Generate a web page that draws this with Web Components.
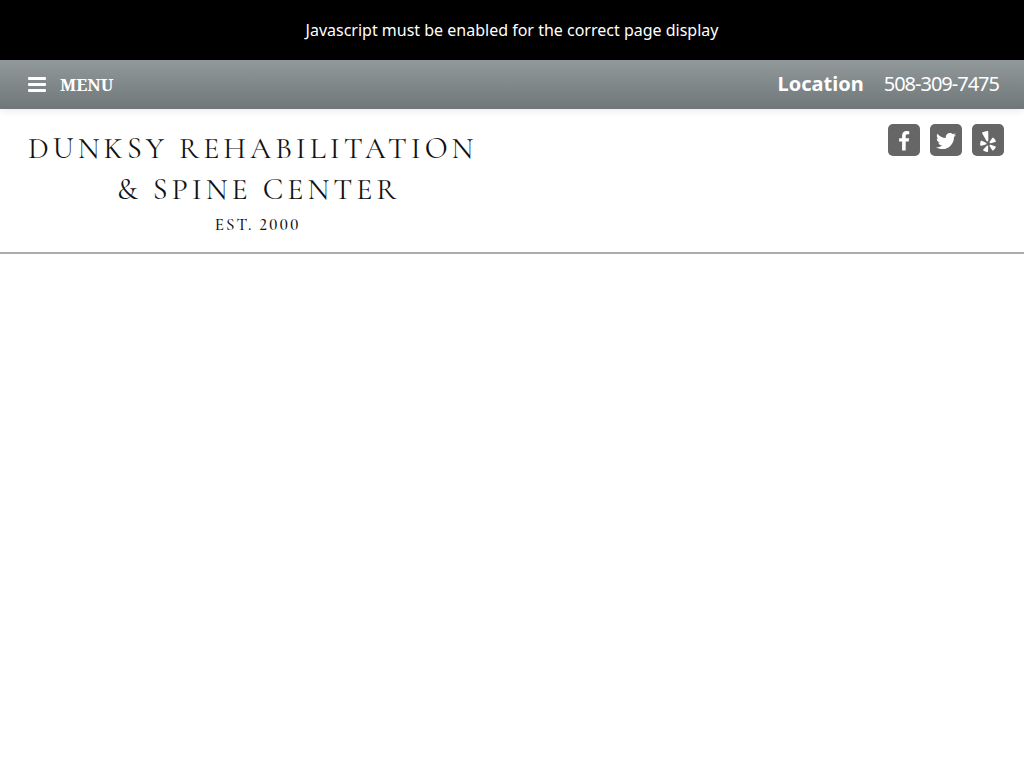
<!DOCTYPE html>
<html lang="en">
<head>
<meta charset="utf-8">
<meta name="viewport" content="width=device-width, initial-scale=1">
<title>Dunksy Rehabilitation &amp; Spine Center</title>
<style>
body { margin: 0; background: #fff; font-family: "Noto Sans", sans-serif; font-size: 16px; }
</style>
</head>
<body>
<page-notice>Javascript must be enabled for the correct page display</page-notice>
<top-bar>
  <bar-link slot="end" href="#location" kind="strong">Location</bar-link>
  <bar-link slot="end" href="tel:5083097475" kind="phone">508-309-7475</bar-link>
</top-bar>
<site-header>
  <site-logo><span slot="name">Dunksy Rehabilitation</span><span slot="detail">&amp; Spine Center</span><span slot="founded">Est. 2000</span></site-logo>
  <social-link slot="social" icon="facebook"></social-link>
  <social-link slot="social" icon="twitter"></social-link>
  <social-link slot="social" icon="yelp"></social-link>
</site-header>
<script>
class BaseElement extends HTMLElement {
  constructor() {
    super();
    this.attachShadow({ mode: "open" });
  }
  connectedCallback() { this.shadowRoot.innerHTML = this.view(); }
}

customElements.define("page-notice", class extends BaseElement {
  view() {
    return `<style>
      :host { display: block; background: #000; color: #fff; text-align: center; line-height: 20px; padding: 20px; }
    </style><slot></slot>`;
  }
});

customElements.define("top-bar", class extends BaseElement {
  view() {
    return `<style>
      :host { display: flex; align-items: center; justify-content: space-between; min-height: 49px; padding: 0 25px 0 28px;
        box-sizing: border-box; color: #fff; background: linear-gradient(#92999b, #6f7779); box-shadow: 0 1px 8px rgba(0,0,0,.1); }
      button { display: flex; align-items: center; gap: 14px; border: 0; padding: 0; background: none; color: inherit;
        font: bold 17px/24px "Noto Serif", "Liberation Serif", serif; cursor: pointer; }
      svg { display: block; width: 18px; height: 15px; fill: currentColor; }
      nav { display: flex; align-items: center; gap: 20px; padding-bottom: 2px; }
    </style>
    <button type="button"><svg viewBox="0 0 18 15" aria-hidden="true"><rect width="18" height="3" rx="1"/><rect y="6" width="18" height="3" rx="1"/><rect y="12" width="18" height="3" rx="1"/></svg>MENU</button>
    <nav><slot name="end"></slot></nav>`;
  }
});

customElements.define("bar-link", class extends BaseElement {
  view() {
    return `<style>
      :host { display: block; }
      a { display: block; color: #fff; text-decoration: none; font-size: 20px; line-height: 28px; }
      :host([kind="strong"]) a { font-weight: bold; }
      :host([kind="phone"]) a { letter-spacing: -1px; }
    </style><a href="${this.getAttribute("href")}"><slot></slot></a>`;
  }
});

customElements.define("site-header", class extends BaseElement {
  view() {
    return `<style>
      :host { display: flex; justify-content: space-between; align-items: flex-start; padding: 15px 20px 13px 28px; border-bottom: 2px solid #acacac; }
      .social { display: flex; gap: 10px; }
    </style><slot></slot><div class="social"><slot name="social"></slot></div>`;
  }
});

customElements.define("site-logo", class extends BaseElement {
  view() {
    return `<style>
      :host { display: block; padding-top: 4px; color: #111; font-family: "Cormorant Garamond", "Liberation Serif", serif; text-transform: uppercase; text-align: center; }
      a { display: block; color: inherit; text-decoration: none; }
      .large { display: block; font-size: 30px; line-height: 41px; letter-spacing: 4px; }
      .detail { padding-left: 12px; }
      .small { display: block; font-size: 17px; line-height: 29px; letter-spacing: 2px; padding-left: 10px; font-weight: 500; font-variant-numeric: lining-nums; }
    </style><a href="#home"><span class="large"><slot name="name"></slot></span><span class="large detail"><slot name="detail"></slot></span><span class="small"><slot name="founded"></slot></span></a>`;
  }
});

const ICONS = {
  facebook: { label: "Facebook", box: "0 0 1024 1792", w: 12, h: 21, d: "M959 12v264H802q-86 0-116 36t-30 108v189h293l-39 296H656v759H350V905H95V609h255V391q0-186 104-288.500T731 0q147 0 228 12z" },
  twitter: { label: "Twitter", box: "0 0 512 512", w: 20, h: 20, d: "M459.370 151.716c.325 4.548.325 9.097.325 13.645 0 138.720-105.583 298.558-298.558 298.558-59.452 0-114.680-17.219-161.137-47.106 8.447.974 16.568 1.299 25.340 1.299 49.055 0 94.213-16.568 130.274-44.832-46.132-.975-84.792-31.188-98.112-72.772 6.498.974 12.995 1.624 19.818 1.624 9.421 0 18.843-1.300 27.614-3.573-48.081-9.747-84.143-51.980-84.143-102.985v-1.299c13.969 7.797 30.214 12.670 47.431 13.319-28.264-18.843-46.781-51.005-46.781-87.391 0-19.492 5.197-37.360 14.294-52.954 51.655 63.675 129.300 105.258 216.365 109.807-1.624-7.797-2.599-15.918-2.599-24.040 0-57.828 46.782-104.934 104.934-104.934 30.213 0 57.502 12.670 76.670 33.137 23.715-4.548 46.456-13.320 66.599-25.340-7.798 24.366-24.366 44.833-46.132 57.827 21.117-2.273 41.584-8.122 60.426-16.243-14.292 20.791-32.161 39.308-52.628 54.253z" },
  yelp: { label: "Yelp", box: "0 0 384 512", w: 16, h: 21, d: "M42.900 240.320l99.620 48.610c19.200 9.400 16.200 37.510-4.500 42.710L30.500 358.450a22.790 22.790 0 0 1-28.210-19.600 197.160 197.160 0 0 1 9-85.320 22.800 22.800 0 0 1 31.610-13.210zm44 239.250a199.450 199.450 0 0 0 79.420 32.110A22.780 22.780 0 0 0 192.940 490l3.900-110.820c.7-21.300-25.500-31.910-39.810-16.100l-74.210 82.400a22.820 22.820 0 0 0 4.090 34.090zm145.340-109.920l58.810 94a22.930 22.930 0 0 0 34 5.500 198.360 198.360 0 0 0 52.710-67.610A23 23 0 0 0 364.170 370l-105.420-34.260c-20.310-6.500-37.810 15.800-26.510 33.910zm148.330-132.230a197.440 197.440 0 0 0-50.410-69.310 22.850 22.850 0 0 0-34 4.400l-62 91.920c-11.900 17.700 4.700 40.610 25.200 34.710L366 268.630a23 23 0 0 0 14.610-31.210zM62.110 30.180a22.860 22.860 0 0 0-9.900 32l104.120 180.440c11.700 20.200 42.610 11.900 42.610-11.400V22.880a22.670 22.670 0 0 0-24.500-22.800 320.370 320.370 0 0 0-112.330 30.100z" }
};

customElements.define("social-link", class extends BaseElement {
  view() {
    const icon = ICONS[this.getAttribute("icon")];
    return `<style>
      :host { display: block; }
      a { display: flex; align-items: center; justify-content: center; width: 32px; height: 32px; box-sizing: border-box; padding-top: 2px; border-radius: 5px; background: #666; color: #fff; }
      svg { display: block; fill: currentColor; }
    </style><a href="#${this.getAttribute("icon")}" aria-label="${icon.label}"><svg width="${icon.w}" height="${icon.h}" viewBox="${icon.box}" aria-hidden="true"><path d="${icon.d}"/></svg></a>`;
  }
});
</script>
</body>
</html>
